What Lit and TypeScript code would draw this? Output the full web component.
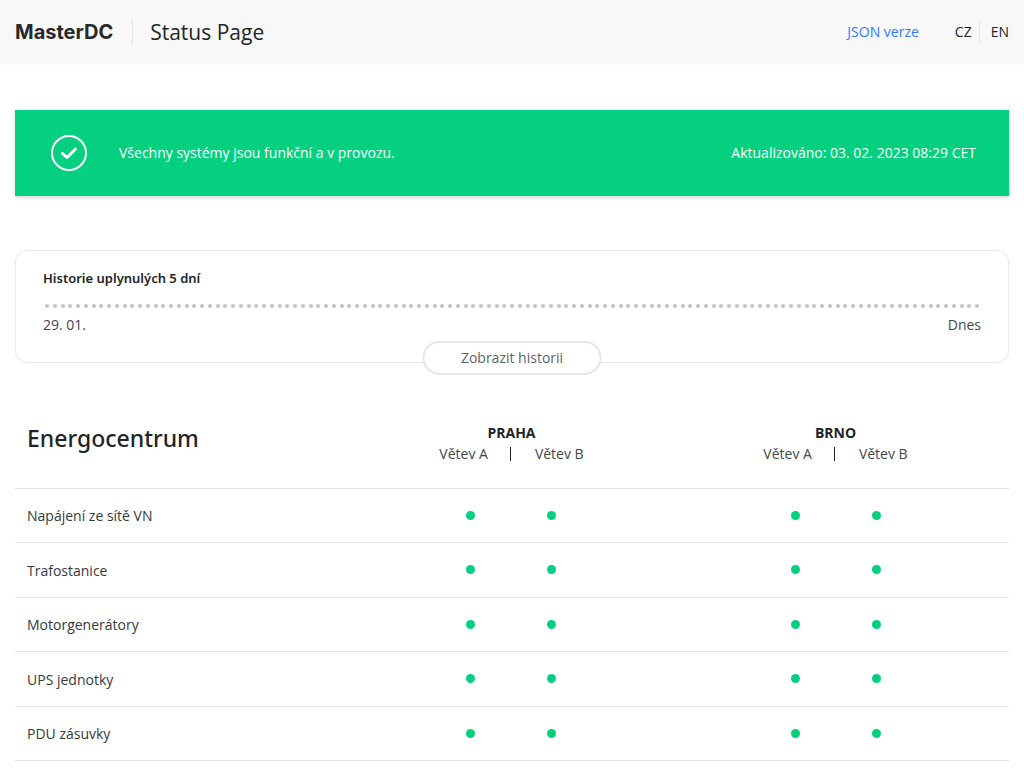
import { LitElement, html, css } from "lit";
import { customElement } from "lit/decorators.js";

const SITES = ["PRAHA", "BRNO"];
const SERVICES = [
  "Napájení ze sítě VN",
  "Trafostanice",
  "Motorgenerátory",
  "UPS jednotky",
  "PDU zásuvky",
];
// one dot per hour over five days, both ends included
const HISTORY = Array.from({ length: 121 }, (_, i) => i);

@customElement("app-root")
export class AppRoot extends LitElement {
  static styles = css`
    :host {
      display: block;
      background: #fff;
      color: #212529;
      font: 14px/20px "Open Sans", "Noto Sans", sans-serif;
    }
    *, *::before, *::after { box-sizing: border-box; }
    a { color: inherit; text-decoration: none; }
    .bar {
      display: flex;
      align-items: center;
      height: 65px;
      padding: 0 15px 2px;
      background: #f8f8f8;
    }
    .brand {
      display: flex;
      align-items: center;
      height: 28px;
      padding-right: 19px;
      border-right: 1px solid #e4e4e4;
      color: #25292c;
      font: 700 20px/24px Inter, sans-serif;
    }
    .title {
      margin: 0 auto 0 17px;
      font-size: 21px;
      line-height: 28px;
      font-weight: 400;
    }
    .json { margin-right: 36px; color: #2f7bff; }
    .langs { display: flex; }
    .langs a + a { margin-left: 7px; padding-left: 11px; border-left: 1px solid #e4e4e4; }
    main { padding: 45px 15px 0; }
    .status {
      display: flex;
      align-items: center;
      height: 86px;
      padding: 0 33px 0 36px;
      background: #05d080;
      color: #fff;
      box-shadow: 0 2px 4px rgba(0, 0, 0, 0.16);
    }
    .status svg { margin-right: 32px; }
    .status p { margin: 0 auto 0 0; }
    .history {
      position: relative;
      height: 113px;
      margin-top: 54px;
      padding: 17px 27px;
      border: 1px solid #e8e8e8;
      border-radius: 12px;
    }
    .history h2 {
      margin: 0;
      font: 600 13px/20px "Noto Sans", sans-serif;
    }
    .dots {
      display: flex;
      justify-content: space-between;
      margin: 16px 2px 7px;
    }
    .tick { width: 4px; height: 4px; border-radius: 50%; background: #c4c4c4; }
    .range { display: flex; justify-content: space-between; color: #42474c; }
    .show {
      position: absolute;
      left: 50%;
      bottom: -13px;
      transform: translateX(-50%);
      width: 179px;
      height: 34px;
      padding: 0;
      border: 2px solid #e6e6e6;
      border-radius: 17px;
      background: #fff;
      color: #5b646d;
      font: inherit;
    }
    table {
      width: 100%;
      height: 355px;
      margin-top: 43px;
      border-collapse: collapse;
      table-layout: fixed;
    }
    th, td { padding: 0; border-bottom: 1px solid #e2e2e2; }
    thead tr { height: 82px; }
    thead th { vertical-align: top; padding-top: 16px; font-weight: 400; }
    .head { text-align: left; }
    .head h2 {
      margin: 0 0 0 12px;
      font: 500 23px/32px "Noto Sans", sans-serif;
    }
    .c-name { width: 41.8%; }
    .c-branch { width: 8.15%; }
    .c-gap { width: 16.3%; }
    .site { display: block; line-height: 22px; font-weight: 700; }
    .branches {
      display: flex;
      justify-content: center;
      align-items: center;
      margin: 0 -10px;
      color: #42474c;
    }
    .sep { width: 1px; height: 14px; margin: 0 24px 0 22px; background: #212529; }
    tbody th { padding: 2px 0 0 12px; text-align: left; font-weight: 400; color: #34393d; }
    .ok { display: block; width: 9px; height: 9px; margin: 0 auto; border-radius: 50%; background: #05d080; }
  `;

  private cells() {
    return html`
      <td><span class="ok" role="img" aria-label="OK"></span></td>
      <td><span class="ok" role="img" aria-label="OK"></span></td>
      <td></td>
    `;
  }

  render() {
    return html`
      <header class="bar">
        <a class="brand" href="#">MasterDC</a>
        <h1 class="title">Status Page</h1>
        <a class="json" href="#json">JSON verze</a>
        <nav class="langs"><a href="#cz">CZ</a><a href="#en">EN</a></nav>
      </header>
      <main>
        <section class="status">
          <svg width="36" height="36" viewBox="0 0 36 36" fill="none" stroke="#fff" aria-hidden="true">
            <circle cx="18" cy="18" r="17" stroke-width="2" />
            <path d="M11.5 18.5l4.5 4L24.5 14" stroke-width="3" stroke-linecap="round" stroke-linejoin="round" />
          </svg>
          <p>Všechny systémy jsou funkční a v provozu.</p>
          <time>Aktualizováno: 03. 02. 2023 08:29 CET</time>
        </section>
        <section class="history">
          <h2>Historie uplynulých 5 dní</h2>
          <div class="dots">${HISTORY.map(() => html`<span class="tick"></span>`)}</div>
          <div class="range"><span>29. 01.</span><span>Dnes</span></div>
          <button class="show" type="button">Zobrazit historii</button>
        </section>
        <table>
          <colgroup>
            <col class="c-name" />
            <col class="c-branch" /><col class="c-branch" /><col class="c-gap" />
            <col class="c-branch" /><col class="c-branch" /><col />
          </colgroup>
          <thead>
            <tr>
              <th class="head"><h2>Energocentrum</h2></th>
              ${SITES.map((s) => html`
                <th colspan="2">
                  <span class="site">${s}</span>
                  <div class="branches"><span>Větev A</span><span class="sep"></span><span>Větev B</span></div>
                </th>
                <th></th>
              `)}
            </tr>
          </thead>
          <tbody>
            ${SERVICES.map((name) => html`
              <tr><th scope="row">${name}</th>${SITES.map(() => this.cells())}</tr>
            `)}
          </tbody>
        </table>
      </main>
    `;
  }
}
